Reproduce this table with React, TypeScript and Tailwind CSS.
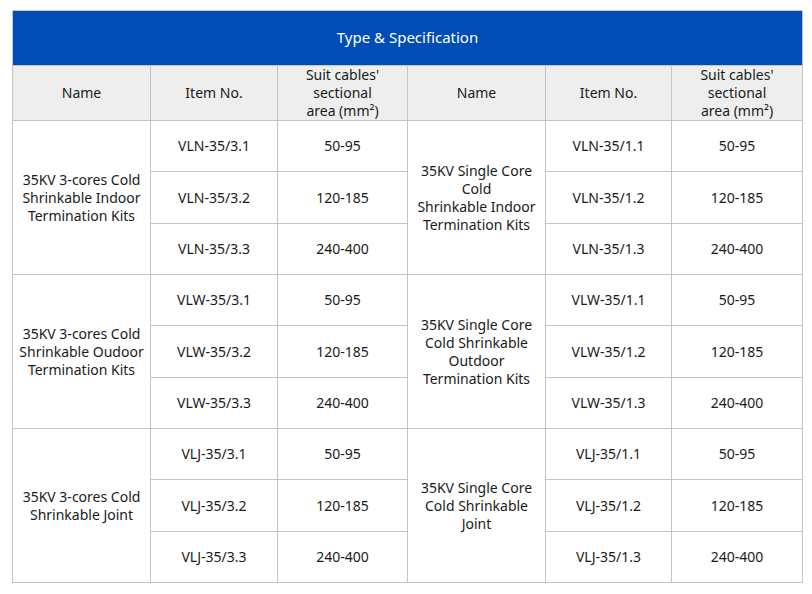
import React from 'react';

interface Group {
  left: string[];
  right: string[];
  leftItems: string[];
  rightItems: string[];
}

const sizes = ['50-95', '120-185', '240-400'];

const groups: Group[] = [
  {
    left: ['35KV 3-cores Cold', 'Shrinkable Indoor', 'Termination Kits'],
    right: ['35KV Single Core', 'Cold', 'Shrinkable Indoor', 'Termination Kits'],
    leftItems: ['VLN-35/3.1', 'VLN-35/3.2', 'VLN-35/3.3'],
    rightItems: ['VLN-35/1.1', 'VLN-35/1.2', 'VLN-35/1.3'],
  },
  {
    left: ['35KV 3-cores Cold', 'Shrinkable Oudoor', 'Termination Kits'],
    right: ['35KV Single Core', 'Cold Shrinkable', 'Outdoor', 'Termination Kits'],
    leftItems: ['VLW-35/3.1', 'VLW-35/3.2', 'VLW-35/3.3'],
    rightItems: ['VLW-35/1.1', 'VLW-35/1.2', 'VLW-35/1.3'],
  },
  {
    left: ['35KV 3-cores Cold', 'Shrinkable Joint'],
    right: ['35KV Single Core', 'Cold Shrinkable', 'Joint'],
    leftItems: ['VLJ-35/3.1', 'VLJ-35/3.2', 'VLJ-35/3.3'],
    rightItems: ['VLJ-35/1.1', 'VLJ-35/1.2', 'VLJ-35/1.3'],
  },
];

const rowHeights = ['h-[51px]', 'h-[52px]', 'h-[51px]'];

const cell = 'border border-[#c4c4c4] text-center align-middle px-1';

const Lines = ({ lines }: { lines: string[] }) => (
  <>
    {lines.map((l, i) => (
      <div key={i}>{l}</div>
    ))}
  </>
);

export default function App() {
  return (
    <div className="bg-white w-[812px] h-[594px] pt-[10px] pl-[12px] text-[14px] leading-[18px] text-[#1a1a1a]" style={{ fontFamily: '"Noto Sans", "Open Sans", sans-serif' }}>
      <table className="border-collapse table-fixed w-[790px]">
        <colgroup>
          <col className="w-[138px]" />
          <col className="w-[127px]" />
          <col className="w-[130px]" />
          <col className="w-[138px]" />
          <col className="w-[126px]" />
          <col className="w-[131px]" />
        </colgroup>
        <thead>
          <tr className="h-[55px]">
            <th colSpan={6} className="border border-[#c4c4c4] bg-[#004db8] text-white font-normal text-[15px] text-center pb-[2px]">
              Type &amp; Specification
            </th>
          </tr>
          <tr className="h-[55px] bg-[#eeeeee]">
            <th className={`${cell} font-normal`}>Name</th>
            <th className={`${cell} font-normal`}>Item No.</th>
            <th className={`${cell} font-normal`}>
              <Lines lines={["Suit cables'", 'sectional', 'area (mm²)']} />
            </th>
            <th className={`${cell} font-normal`}>Name</th>
            <th className={`${cell} font-normal`}>Item No.</th>
            <th className={`${cell} font-normal`}>
              <Lines lines={["Suit cables'", 'sectional', 'area (mm²)']} />
            </th>
          </tr>
        </thead>
        <tbody>
          {groups.map((g, gi) =>
            [0, 1, 2].map((r) => (
              <tr key={`${gi}-${r}`} className={rowHeights[r]}>
                {r === 0 && (
                  <td rowSpan={3} className={cell}>
                    <Lines lines={g.left} />
                  </td>
                )}
                <td className={cell}>{g.leftItems[r]}</td>
                <td className={cell}>{sizes[r]}</td>
                {r === 0 && (
                  <td rowSpan={3} className={cell}>
                    <Lines lines={g.right} />
                  </td>
                )}
                <td className={cell}>{g.rightItems[r]}</td>
                <td className={cell}>{sizes[r]}</td>
              </tr>
            ))
          )}
        </tbody>
      </table>
    </div>
  );
}
